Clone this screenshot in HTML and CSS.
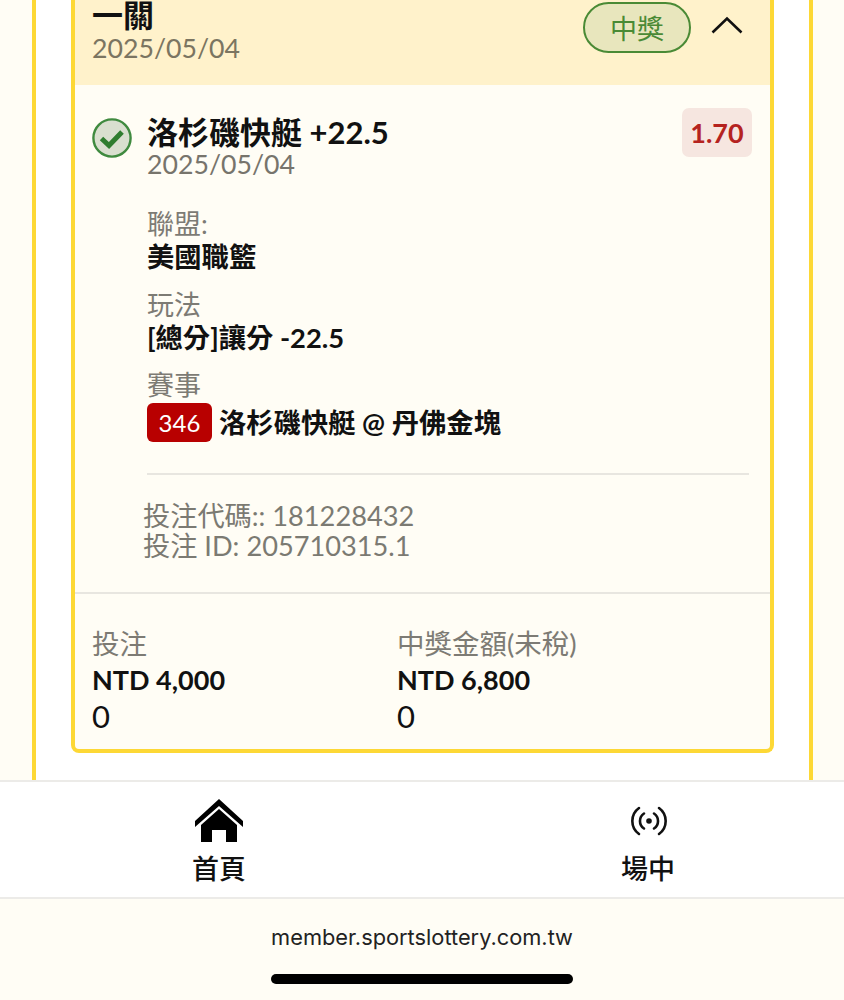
FILE: index.html
```html
<!DOCTYPE html>
<html lang="zh-Hant">
<head>
<meta charset="UTF-8">
<meta name="viewport" content="width=device-width, initial-scale=1.0">
<title>投注紀錄</title>
<link rel="stylesheet" href="styles.css">
</head>
<body>

<main class="page">
  <div class="panel">
    <section class="card">
      <header class="card-head">
        <div>
          <div class="head-title">一關</div>
          <div class="head-date">2025/05/04</div>
        </div>
        <div class="head-side">
          <span class="pill">中獎</span>
          <svg class="chevron" width="32" height="18" viewBox="0 0 32 18">
            <path d="M1.5 16.5 L16 2.5 L30.5 16.5" fill="none" stroke="#111" stroke-width="2.6"/>
          </svg>
        </div>
      </header>

      <div class="bet">
        <svg class="check" width="40" height="40" viewBox="0 0 40 40">
          <circle cx="20" cy="20" r="18.6" fill="#d9dfcf" stroke="#3f8a3f" stroke-width="2.4"/>
          <path d="M9.5 20.5 L17 27.5 L30 14" fill="none" stroke="#2f7d2f" stroke-width="5"/>
        </svg>
        <div class="bet-main">
          <div class="bet-top">
            <div>
              <div class="bet-title">洛杉磯快艇 +22.5</div>
              <div class="bet-date">2025/05/04</div>
            </div>
            <span class="odds">1.70</span>
          </div>

          <div class="field field-first">
            <div class="label">聯盟:</div>
            <div class="value">美國職籃</div>
          </div>
          <div class="field">
            <div class="label">玩法</div>
            <div class="value">[總分]讓分 -22.5</div>
          </div>
          <div class="field field-match">
            <div class="label">賽事</div>
            <div class="value match"><span class="match-no">346</span>洛杉磯快艇 @ 丹佛金塊</div>
          </div>

          <div class="codes">
            <div>投注代碼:: 181228432</div>
            <div>投注 ID: 205710315.1</div>
          </div>
        </div>
      </div>

      <div class="totals">
        <div class="total">
          <div class="label">投注</div>
          <div class="amount">NTD 4,000</div>
          <div class="zero">0</div>
        </div>
        <div class="total">
          <div class="label">中獎金額(未稅)</div>
          <div class="amount">NTD 6,800</div>
          <div class="zero">0</div>
        </div>
      </div>
    </section>
  </div>
</main>

<nav class="nav">
  <a class="nav-item">
    <svg width="50" height="44" viewBox="0 0 50 44">
      <path d="M25 0 L49 22 V28 L25 7 L1 28 V22 Z" fill="#000"/>
      <path d="M25 10 L43 26 V43 H32 V31 H18 V43 H7 V26 Z" fill="#000"/>
    </svg>
    <span>首頁</span>
  </a>
  <a class="nav-item">
    <svg width="50" height="44" viewBox="0 0 50 44">
      <circle cx="26" cy="22" r="2.8" fill="#111"/>
      <path d="M21 14.5 A9 9 0 0 0 21 29.5 M31 14.5 A9 9 0 0 1 31 29.5" fill="none" stroke="#111" stroke-width="2.6" stroke-linecap="round"/>
      <path d="M16 9 A16 16 0 0 0 16 35 M36 9 A16 16 0 0 1 36 35" fill="none" stroke="#111" stroke-width="2.6" stroke-linecap="round"/>
    </svg>
    <span>場中</span>
  </a>
</nav>

<footer class="browser-bar">
  <div class="url">member.sportslottery.com.tw</div>
  <div class="home-bar"></div>
</footer>

</body>
</html>
```

FILE: styles.css
```css
* {
  box-sizing: border-box;
}
body {
  margin: 0;
  height: 1000px;
  overflow: hidden;
  display: flex;
  flex-direction: column;
  background-color: #fffdf5;
  color: #111;
  font-family: Lato, "Noto Sans CJK TC", sans-serif;
}
.page {
  height: 780px;
  padding: 0 31px 0 32px;
  overflow: hidden;
}
.panel {
  height: 100%;
  padding: 0 35px;
  background-color: #fff;
  border-left: 4px solid #fdd835;
  border-right: 4px solid #fdd835;
}
.card {
  height: 753px;
  background-color: #fffdf5;
  border: 4px solid #fdd835;
  border-top: 0;
  border-radius: 0 0 8px 8px;
}

.card-head {
  height: 85px;
  padding: 0 27px 0 17px;
  display: flex;
  justify-content: space-between;
  background-color: #fff2cb;
}
.head-title {
  height: 31px;
  font-size: 31px;
  line-height: 31px;
  font-weight: 700;
}
.head-date {
  font-size: 26.7px;
  line-height: 34px;
  color: #7b7561;
}
.head-side {
  display: flex;
  gap: 20px;
  padding-top: 2px;
}
.pill {
  width: 108px;
  height: 51px;
  display: flex;
  align-items: center;
  justify-content: center;
  font-size: 27px;
  color: #4a8a35;
  background-color: #e8e6bd;
  border: 2px solid #4a8a35;
  border-radius: 26px;
}
.chevron {
  margin-top: 14px;
}

.bet {
  height: 509px;
  padding: 33px 18px 0 17px;
  display: flex;
  gap: 15px;
  border-bottom: 2px solid #e8e6e0;
}
.check {
  flex-shrink: 0;
}
.bet-main {
  flex: 1;
  margin-top: -9px;
}
.bet-top {
  display: flex;
  justify-content: space-between;
  align-items: flex-start;
}
.bet-title {
  font-size: 31px;
  line-height: 34px;
  font-weight: 700;
  margin-top: 6px;
}
.bet-date {
  font-size: 26.7px;
  line-height: 30px;
  color: #77746c;
}
.odds {
  width: 70px;
  height: 49px;
  margin-top: -1px;
  display: flex;
  align-items: center;
  justify-content: center;
  font-size: 27px;
  font-weight: 700;
  color: #b5231f;
  background-color: #f6e6e0;
  border-radius: 7px;
}
.field {
  margin-top: 14px;
}
.field-first {
  margin-top: 28px;
}
.field-match {
  margin-top: 13px;
}
.label {
  font-size: 27px;
  line-height: 33px;
  color: #7d7b74;
}
.value {
  font-size: 27.3px;
  line-height: 34px;
  font-weight: 700;
}
.match {
  display: flex;
  align-items: center;
  gap: 7px;
  margin-top: 2px;
  line-height: 38px;
}
.match-no {
  width: 65px;
  height: 39px;
  display: flex;
  align-items: center;
  justify-content: center;
  font-size: 24px;
  font-weight: 400;
  color: #fff;
  background-color: #b80000;
  border-radius: 6px;
}
.codes {
  margin-top: 31px;
  margin-right: 3px;
  padding-top: 26px;
  border-top: 2px solid #e8e6e0;
  font-size: 27.2px;
  line-height: 30px;
  color: #7b7a72;
  text-indent: -4px;
}

.totals {
  padding: 33px 18px 0 17px;
  display: grid;
  grid-template-columns: 305px 1fr;
}
.total .label {
  font-size: 27.5px;
}
.amount {
  margin-top: 1px;
  font-size: 27px;
  line-height: 38px;
  font-weight: 700;
}
.zero {
  font-size: 31px;
  line-height: 34px;
}

.nav {
  height: 119px;
  display: grid;
  grid-template-columns: 1fr 1fr;
  padding: 17px 0 0;
  background-color: #fff;
  border-top: 2px solid #ecebe8;
  border-bottom: 2px solid #ecebe8;
}
.nav-item {
  display: flex;
  flex-direction: column;
  align-items: center;
  font-size: 27px;
  font-weight: 500;
  line-height: 36px;
  color: #111;
}
.nav-item svg {
  margin-bottom: 8px;
}
.nav-item:first-child {
  padding-left: 16px;
}
.nav-item:last-child {
  padding-left: 30px;
}

.browser-bar {
  flex: 1;
  display: flex;
  flex-direction: column;
  align-items: center;
  padding-top: 23px;
}
.url {
  font-family: Inter, "Liberation Sans", sans-serif;
  font-size: 21.8px;
  line-height: 30px;
  color: #222;
}
.home-bar {
  width: 302px;
  height: 10px;
  margin-top: 22px;
  background-color: #000;
  border-radius: 5px;
}
```
